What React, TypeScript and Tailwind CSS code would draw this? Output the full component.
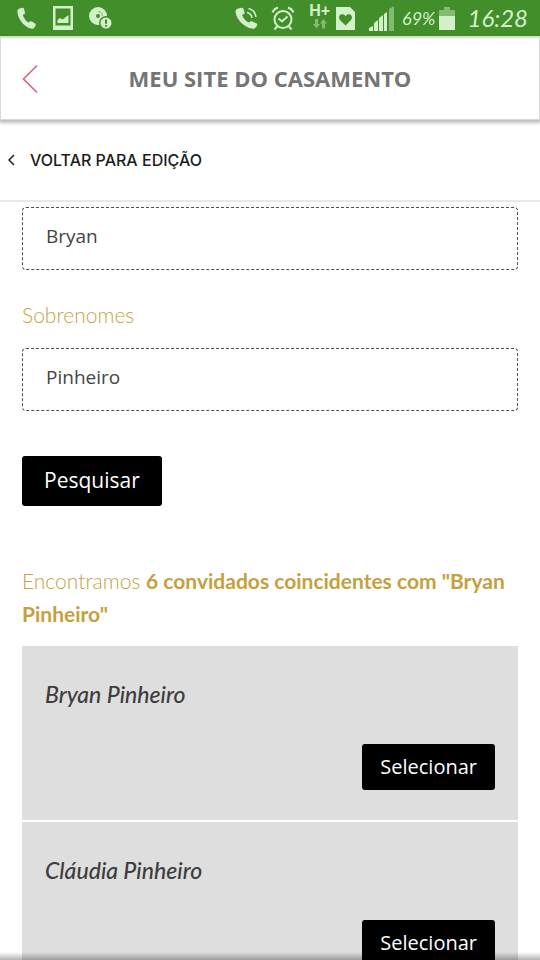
import { useState } from 'react';
import type { FormEvent } from 'react';

const guests = [
  { id: 1, name: 'Bryan Pinheiro' },
  { id: 2, name: 'Cláudia Pinheiro' },
];

const inputClass =
  'block h-[63px] w-full rounded border border-dashed border-[#505050] bg-white px-[23px] pb-1.5 text-[19px] text-[#444] outline-none';

const handset =
  'M3.5 1.5 6.5 0.8 C7.3 0.7 7.7 1.2 8 2 L9 5.6 C9.1 6.4 8.8 6.9 8 7.3 L6.8 8 C7.8 11.2 9.7 13.9 12.5 15.6 L13.8 14.6 C14.5 14.1 15.1 14.1 15.8 14.5 L19.2 16.6 C19.9 17.1 20 17.7 19.6 18.4 L18.2 20.7 C17.5 21.6 16.5 21.9 15 21.5 C8 19.6 2.2 12.3 1.4 5.4 C1.2 3.4 1.8 2 3.5 1.5Z';

function StatusBar() {
  return (
    <div className="flex h-9 shrink-0 items-center justify-between bg-[#418e2b] pl-4 pr-3 font-[Lato,sans-serif] text-[#d3f1c8]">
      <div className="flex items-center gap-4">
        <svg width="21" height="23" viewBox="0 0 21 23" fill="currentColor">
          <path d={handset} />
        </svg>
        <svg width="20" height="24" viewBox="0 0 20 24" fill="currentColor">
          <path fillRule="evenodd" d="M0 0H20V24H0ZM2.5 2.5V19.5H17.5V2.5Z" />
          <path d="M4.5 17V14L7 12 9.5 13.5 15.5 9V17Z" />
        </svg>
        <svg width="24" height="23" viewBox="0 0 24 23">
          <circle cx="9" cy="9" r="9" fill="currentColor" />
          <circle cx="9" cy="9" r="2" fill="#418e2b" />
          <path d="M9 4.5A4.5 4.5 0 0 1 13.5 9" fill="none" stroke="#9bcc8a" strokeWidth="1.5" />
          <circle cx="17" cy="16" r="7" fill="#418e2b" />
          <circle cx="17" cy="16" r="5.5" fill="currentColor" />
          <path d="M17 12.5V16.8M17 18V19.8" stroke="#418e2b" strokeWidth="2" />
        </svg>
      </div>

      <div className="flex items-center">
        <svg className="mr-3" width="25" height="24" viewBox="0 0 25 24" fill="currentColor">
          <path transform="translate(0 1) scale(1.18 1)" d={handset} />
          <path
            d="M13 6.5C15.5 7 17.5 9 18 12M14.5 2.5C18.5 3.5 21.5 7 22 11"
            fill="none"
            stroke="currentColor"
            strokeWidth="1.6"
          />
        </svg>
        <svg
          className="mr-3.5"
          width="24"
          height="25"
          viewBox="0 0 24 25"
          fill="none"
          stroke="currentColor"
          strokeWidth="2"
        >
          <circle cx="12" cy="13.5" r="8.5" />
          <path d="M7.5 12.5 11 15.5 16.5 10.5M1.5 6.5C2.5 4 4.5 2.3 7 1.5M17 1.5C19.5 2.3 21.5 4 22.5 6.5M6 20.5 3.5 23.5M18 20.5 20.5 23.5" />
        </svg>
        <div className="mr-1.5 flex flex-col items-center pb-1">
          <span className="font-['Liberation_Sans',sans-serif] text-[16px] leading-4 font-bold">
            H+
          </span>
          <svg width="16" height="10" viewBox="0 0 16 10" fill="#83bc70">
            <path d="M3 0H6V5H8L4.5 9.5 1 5H3ZM10 9.5V4.5H8L11.5 0 15 4.5H13V9.5Z" />
          </svg>
        </div>
        <svg className="mr-3.5" width="19" height="23" viewBox="0 0 19 23">
          <path d="M0 0H14L19 5V23H0Z" fill="currentColor" />
          <path
            d="M9.5 18.5 4.2 13.2C2.5 11.3 2.7 8.8 4.5 7.7 6.3 6.7 8.5 7.3 9.5 9.2 10.5 7.3 12.7 6.7 14.5 7.7 16.3 8.8 16.5 11.3 14.8 13.2Z"
            fill="#418e2b"
          />
        </svg>
        <svg className="mr-2" width="25" height="25" viewBox="0 0 25 25" fill="currentColor">
          <path d="M0 25V22L4 20V25ZM5 25V17L9 14V25ZM10 25V12L14 9V25ZM15 25V8L18 6V25Z" />
          <path d="M20 25V3L25 0V25Z" fill="#83bc70" />
        </svg>
        <span className="mr-1 text-[18px] italic">69%</span>
        <svg className="mr-3" width="16" height="23" viewBox="0 0 16 23">
          <path d="M5 0H11V3H16V9H0V3H5Z" fill="#83bc70" />
          <path d="M0 9H16V23H0Z" fill="currentColor" />
        </svg>
        <span className="text-[24px] leading-9 italic">16:28</span>
      </div>
    </div>
  );
}

function Header() {
  return (
    <header className="relative z-10 grid h-[84px] shrink-0 grid-cols-[60px_1fr_60px] items-center border border-t-2 border-[#d9d9d9] border-t-[#cde9c2] bg-white shadow-[0_2px_3px_1px_rgba(0,0,0,0.25)]">
      <button type="button" aria-label="Voltar" className="flex h-full items-center pl-[21px]">
        <svg width="16" height="30" viewBox="0 0 16 30" fill="none" stroke="#d66b78" strokeWidth="1.7">
          <path d="M15 1.5 1.5 15 15 28.5" />
        </svg>
      </button>
      <h1 className="text-center font-['Open_Sans',sans-serif] text-[22px] font-bold whitespace-nowrap text-[#757575]">
        MEU SITE DO CASAMENTO
      </h1>
    </header>
  );
}

export default function App() {
  const [firstName, setFirstName] = useState('Bryan');
  const [lastName, setLastName] = useState('Pinheiro');

  const handleSubmit = (e: FormEvent) => {
    e.preventDefault();
  };

  return (
    <div className="relative flex h-screen flex-col overflow-hidden bg-white font-['Open_Sans',sans-serif]">
      <StatusBar />
      <Header />

      <nav className="flex h-[82px] shrink-0 items-center border-b-2 border-[#e8e8e8] px-2">
        <a
          href="#edicao"
          className="flex items-center gap-3.5 font-[Inter,sans-serif] text-[16px] font-medium text-[#1c1c1c]"
        >
          <svg width="8" height="12" viewBox="0 0 8 12" fill="none" stroke="currentColor" strokeWidth="1.5">
            <path d="M6 1 1 6 6 11" />
          </svg>
          VOLTAR PARA EDIÇÃO
        </a>
      </nav>

      <main className="min-h-0 flex-1 overflow-y-auto px-[22px] pt-[5px] [scrollbar-width:none]">
        <form onSubmit={handleSubmit}>
          <input
            type="text"
            aria-label="Nome"
            className={inputClass}
            value={firstName}
            onChange={(e) => setFirstName(e.target.value)}
          />
          <label
            htmlFor="last-name"
            className="mt-7 mb-4 block font-[Lato,sans-serif] text-[21px] leading-[34px] font-light text-[#c4a344]"
          >
            Sobrenomes
          </label>
          <input
            id="last-name"
            type="text"
            className={inputClass}
            value={lastName}
            onChange={(e) => setLastName(e.target.value)}
          />
          <button
            type="submit"
            className="mt-[45px] block h-[50px] rounded-[3px] bg-black px-[22px] text-[21px] text-white"
          >
            Pesquisar
          </button>
        </form>

        <p className="mt-[58px] mb-4 font-[Lato,sans-serif] text-[21px] leading-[33px] font-light text-[#c4a344]">
          Encontramos{' '}
          <strong className="font-bold text-[#c5a03d]">
            6 convidados coincidentes com "Bryan Pinheiro"
          </strong>
        </p>

        <ul className="flex flex-col gap-0.5">
          {guests.map((guest) => (
            <li key={guest.id} className="flex flex-col bg-[#dedede] px-[23px] pt-8 pb-[30px]">
              <span className="font-[Lato,sans-serif] text-[23px] leading-8 font-medium text-[#3d3d3d] italic">
                {guest.name}
              </span>
              <button
                type="button"
                className="mt-[34px] h-[46px] self-end rounded-[3px] bg-black px-[18px] text-[20px] text-white"
              >
                Selecionar
              </button>
            </li>
          ))}
        </ul>
      </main>

      {/* bottom edge shade */}
      <div className="pointer-events-none absolute inset-x-0 bottom-0 h-2 bg-gradient-to-t from-black/30 to-transparent" />
    </div>
  );
}
